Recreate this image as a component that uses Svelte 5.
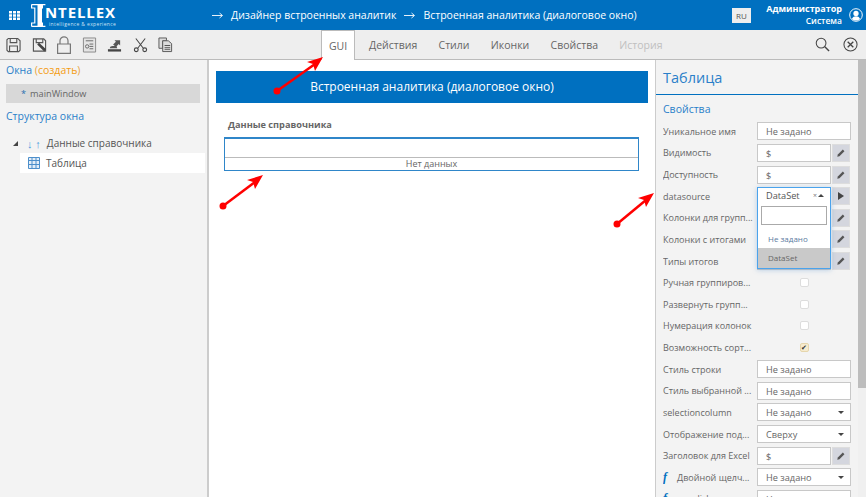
<script>
  const tabs = ['Действия', 'Стили', 'Иконки', 'Свойства'];

  const upperRows = [
    { label: 'Уникальное имя', kind: 'text', value: 'Не задано' },
    { label: 'Видимость', kind: 'edit', value: '$' },
    { label: 'Доступность', kind: 'edit', value: '$' }
  ];

  const lowerRows = [
    { label: 'Стиль строки', kind: 'text', value: 'Не задано' },
    { label: 'Стиль выбранной ...', kind: 'text', value: 'Не задано' },
    { label: 'selectioncolumn', kind: 'select', value: 'Не задано' },
    { label: 'Отображение под...', kind: 'select', value: 'Сверху' },
    { label: 'Заголовок для Excel', kind: 'edit', value: '$' },
    { label: 'Двойной щелч...', kind: 'select', value: 'Не задано', fn: true },
    { label: 'rowclick', kind: 'select', value: 'Не задано', fn: true }
  ];

  const arrows = [
    { x1: 277, y1: 91, x2: 323, y2: 57 },
    { x1: 223, y1: 206, x2: 263, y2: 175 },
    { x1: 617, y1: 224, x2: 654, y2: 193 }
  ];
</script>

{#snippet pencil()}
  <svg class="pencil" viewBox="0 0 12 12"><path d="M1.5 10.5l.7-2.6 6-6 1.9 1.9-6 6z" fill="#555" /></svg>
{/snippet}

{#snippet crumbArrow()}
  <svg class="crumb-arrow" viewBox="0 0 11 7"><path d="M0 3.5h10M7.500 1l3 2.500-3 2.500" fill="none" stroke="#fff" stroke-width="0.9" /></svg>
{/snippet}

{#snippet row(r)}
  <div class="row">
    <span class="label">
      {#if r.fn}<i class="fn">f</i>{/if}{r.label}
    </span>
    {#if r.kind === 'text'}
      <div class="field wide">{r.value}</div>
    {:else if r.kind === 'select'}
      <div class="field wide select">{r.value}<b class="caret"></b></div>
    {:else}
      <div class="field">{r.value}</div>
      <div class="side">{@render pencil()}</div>
    {/if}
  </div>
{/snippet}

<div class="app">
  <header class="top">
    <svg class="grid-icon" viewBox="0 0 11 9">
      <path d="M0 0h3v2.500H0zM4 0h3v2.500H4zM8 0h3v2.500H8zM0 3.300h3v2.500H0zM4 3.300h3v2.500H4zM8 3.300h3v2.500H8zM0 6.500h3V9H0zM4 6.500h3V9H4zM8 6.500h3V9H8z" fill="#fff" />
    </svg>
    <div class="logo">
      <svg class="logo-i" viewBox="0 0 15 23">
        <path d="M.6.6h13.800M.6 22.400h13.800M.6.6v3.400h3.200v15H.6v3.400" fill="none" stroke="#fff" stroke-width="1.200" />
        <path d="M6.500 1h5.500v3.500h-1v14h1V22H6.500z" fill="#fff" />
      </svg>
      <div class="logo-text">
        <span class="logo-name">NTELLEX</span>
        <span class="logo-sub">intelligence &amp; experience</span>
      </div>
    </div>
    <nav class="crumbs">
      {@render crumbArrow()}<span>Дизайнер встроенных аналитик</span>
      {@render crumbArrow()}<span>Встроенная аналитика (диалоговое окно)</span>
    </nav>
    <div class="lang">RU</div>
    <div class="user">
      <strong>Администратор</strong>
      <small>Система</small>
    </div>
    <svg class="avatar" viewBox="0 0 16 16">
      <circle cx="8" cy="8" r="7.200" fill="none" stroke="#fff" stroke-width="1.100" />
      <circle cx="8" cy="6.200" r="3" fill="#fff" />
      <path d="M3.400 12.600c.8-2.400 2.600-3.200 4.600-3.200s3.800.8 4.600 3.200A6.400 6.400 0 0 1 8 14.400a6.400 6.400 0 0 1-4.600-1.800z" fill="#fff" />
    </svg>
  </header>

  <div class="toolbar">
    <div class="tools">
      <svg viewBox="0 0 16 16"><path d="M2.500 1h10l2.500 2.500v10l-1.500 1.500h-11L1 13.500v-11zM4.500 1v4.500h7V1M3.800 15V9h8.400v6" fill="none" stroke="#555" stroke-width="1.200" /></svg>
      <svg viewBox="0 0 16 16"><path d="M1.500 1.500h11l2 2v11h-13zM4.500 1.500v4h7v-4" fill="none" stroke="#555" stroke-width="1.200" /><path d="M5.500 7.500l2-2 7.500 7-2 2.500z" fill="#444" /></svg>
      <svg class="lock" viewBox="0 0 14 18"><path d="M3 8V4.800a4 4 0 0 1 8 0V8M.6 8h12.800v9.400H.6z" fill="none" stroke="#777" stroke-width="1.200" /></svg>
      <svg viewBox="0 0 16 16"><path d="M1.500 .5h13v15h-13z" fill="#e4e4e4" stroke="#888" /><path d="M4 3.500h8M8 7h4M8 9.500h4M8 12h4" stroke="#666" /><circle cx="5.500" cy="9.500" r="1.800" fill="none" stroke="#666" /></svg>
      <svg viewBox="0 0 16 16"><path d="M1 12.500h14V15H1z" fill="#444" /><path d="M3 11.500c0-1.800 1.500-2.500 3-2.500h4l1 2.500z" fill="#555" /><path d="M6.500 7.500l3-3L8 3h6v5.500l-1.500-1.500-3 3z" fill="#555" /></svg>
      <svg viewBox="0 0 16 16"><path d="M3 1l8 10.500M13 1L5 11.500" stroke="#444" stroke-width="1.100" fill="none" /><circle cx="3.500" cy="13" r="2" fill="none" stroke="#444" stroke-width="1.200" /><circle cx="12.500" cy="13" r="2" fill="none" stroke="#444" stroke-width="1.200" /></svg>
      <svg viewBox="0 0 16 16"><path d="M1 .5h8v3H5v8H1z" fill="#ddd" stroke="#555" /><path d="M5 3.500h6l3.500 3v8.500H5z" fill="#ddd" stroke="#555" /><path d="M7 8h6v1H7zM7 10h6v1H7zM7 12h6v1H7z" fill="#555" /></svg>
    </div>
    <div class="tabs">
      <span class="tab active">GUI</span>
      {#each tabs as tab}
        <span class="tab">{tab}</span>
      {/each}
      <span class="tab muted">История</span>
    </div>
    <div class="tool-right">
      <svg viewBox="0 0 16 16"><circle cx="6.500" cy="6.500" r="5.200" fill="none" stroke="#444" stroke-width="1.100" /><path d="M10.500 10.500L15 15" stroke="#444" stroke-width="1.500" /></svg>
      <svg viewBox="0 0 16 16"><circle cx="8" cy="8" r="7" fill="none" stroke="#444" stroke-width="1.100" /><path d="M5 5l6 6M11 5l-6 6" stroke="#444" stroke-width="1.400" /></svg>
    </div>
  </div>

  <main class="body">
    <aside class="left">
      <h3>Окна <span class="paren">(<span class="create">создать</span>)</span></h3>
      <div class="window-item"><span class="star">*</span>mainWindow</div>
      <h3 class="structure">Структура окна</h3>
      <div class="tree-root">
        <b class="tree-toggle"></b>
        <span class="sort">↓ ↑</span>
        <span>Данные справочника</span>
      </div>
      <div class="tree-child">
        <svg viewBox="0 0 12 12"><path d="M.5.5h11v11H.5zM.5 3.500h11M.5 7.500h11M4 .5v11M8 .5v11" fill="#e4eef8" stroke="#4d8fcb" /></svg>
        <span>Таблица</span>
      </div>
    </aside>

    <section class="center">
      <div class="banner">Встроенная аналитика (диалоговое окно)</div>
      <div class="caption">Данные справочника</div>
      <div class="table">
        <div class="thead"></div>
        <div class="empty">Нет данных</div>
      </div>
    </section>

    <aside class="right">
      <h2>Таблица</h2>
      <h4>Свойства</h4>
      <div class="props">
        {#each upperRows as r}{@render row(r)}{/each}

        <div class="row open">
          <span class="label">datasource</span>
          <div class="dropdown">
            <div class="dd-value">DataSet<span class="dd-controls">×<b class="caret up"></b></span></div>
            <div class="dd-search"></div>
            <div class="dd-option">Не задано</div>
            <div class="dd-option selected">DataSet</div>
          </div>
          <div class="side"><b class="play"></b></div>
        </div>
        <div class="row">
          <span class="label">Колонки для групп...</span>
          <div class="field"></div>
          <div class="side">{@render pencil()}</div>
        </div>
        <div class="row">
          <span class="label">Колонки с итогами</span>
          <div class="field"></div>
          <div class="side">{@render pencil()}</div>
        </div>
        <div class="row">
          <span class="label">Типы итогов</span>
          <div class="field"></div>
          <div class="side">{@render pencil()}</div>
        </div>
        <div class="row"><span class="label">Ручная группиров...</span><span class="check"></span></div>
        <div class="row"><span class="label">Развернуть групп...</span><span class="check"></span></div>
        <div class="row"><span class="label">Нумерация колонок</span><span class="check"></span></div>
        <div class="row"><span class="label">Возможность сорт...</span><span class="check on">✔</span></div>

        {#each lowerRows as r}{@render row(r)}{/each}
      </div>
    </aside>
    <div class="scrollbar"><div class="thumb"></div></div>
  </main>

  <svg class="arrows" width="866" height="497">
    {#each arrows as a}
      <circle cx={a.x1} cy={a.y1} r="3.500" fill="#f00" />
      <line x1={a.x1} y1={a.y1} x2={a.x2 - 8} y2={a.y2 + 7} stroke="#f00" stroke-width="2.500" />
      <path d="M{a.x2} {a.y2}l-16 5 6 2 2 7z" fill="#f00" />
    {/each}
  </svg>
</div>

<style>
  :global(body) {
    margin: 0;
    overflow: hidden;
  }

  .app {
    position: relative;
    width: 866px;
    height: 497px;
    overflow: hidden;
    font-family: 'Open Sans', 'Noto Sans', sans-serif;
    font-size: 11px;
    color: #555;
    background: #fff;
  }

  .top {
    display: flex;
    align-items: center;
    height: 30px;
    background: #0070c0;
    color: #fff;
  }

  .grid-icon {
    width: 11px;
    height: 9px;
    margin-left: 9px;
  }

  .logo {
    display: flex;
    align-items: center;
    margin-left: 11px;
    width: 181px;
  }

  .logo-i {
    width: 15px;
    height: 23px;
  }

  .logo-text {
    display: flex;
    flex-direction: column;
    margin-left: -1px;
  }

  .logo-name {
    font-size: 15px;
    font-weight: 700;
    letter-spacing: 0.9px;
    line-height: 17px;
  }

  .logo-sub {
    font-size: 5px;
    line-height: 6px;
    letter-spacing: 0.35px;
    margin-left: 4px;
    color: #cfe4f5;
  }

  .crumbs {
    display: flex;
    align-items: center;
    gap: 8px;
    font-size: 10.500px;
    white-space: nowrap;
  }

  .crumb-arrow {
    width: 11px;
    height: 7px;
  }

  .lang {
    width: 19px;
    height: 15px;
    line-height: 15px;
    margin-left: auto;
    background: #eee;
    color: #555;
    font-size: 8px;
    text-align: center;
  }

  .user {
    display: flex;
    flex-direction: column;
    align-items: flex-end;
    width: 91px;
    line-height: 12px;
  }

  .user strong {
    font-size: 9px;
  }

  .user small {
    font-size: 8.500px;
    font-weight: 600;
  }

  .avatar {
    width: 14px;
    height: 14px;
    margin: 0 3px 0 7px;
  }

  .toolbar {
    display: flex;
    height: 29px;
    background: #eee;
    border-bottom: 1px solid #bbb;
    position: relative;
  }

  .tools {
    display: flex;
    align-items: center;
    gap: 10.500px;
    width: 321px;
    padding-left: 6px;
    box-sizing: border-box;
  }

  .tools svg {
    width: 15px;
    height: 16px;
  }

  .tools svg.lock {
    width: 14px;
    height: 18px;
  }

  .tabs {
    display: flex;
    height: 30px;
  }

  .tab {
    margin-right: 21.300px;
    line-height: 30px;
    font-size: 10.500px;
    color: #666;
  }

  .tab.active {
    width: 34px;
    margin-right: 14px;
    background: #fff;
    border: 1px solid #bbb;
    border-bottom: none;
    box-sizing: border-box;
    text-align: center;
  }

  .tab.muted {
    color: #c0c0c0;
  }

  .tool-right {
    display: flex;
    align-items: center;
    gap: 13px;
    margin-left: auto;
    padding-right: 8px;
  }

  .tool-right svg {
    width: 15px;
    height: 15px;
  }

  .body {
    display: flex;
    height: 437px;
  }

  .left {
    width: 209px;
    flex: none;
    box-sizing: border-box;
    padding: 2px 0 0 6px;
    background: #f3f3f3;
    border-right: 2px solid #ccc;
  }

  .left h3 {
    margin: 0;
    font-size: 10.500px;
    font-weight: 400;
    line-height: 16px;
    color: #2a7fc9;
  }

  .paren {
    color: #e8a33d;
  }

  .create {
    color: #f39c12;
  }

  .window-item {
    display: flex;
    align-items: center;
    width: 194px;
    height: 19px;
    margin-top: 6px;
    padding-left: 15px;
    box-sizing: border-box;
    background: #d8d8d8;
    color: #666;
    font-size: 9.200px;
  }

  .star {
    color: #2a6fb0;
    margin-right: 4px;
  }

  .left .structure {
    margin-top: 5px;
  }

  .tree-root {
    display: flex;
    align-items: center;
    height: 20px;
    margin: 9px 0 0 7px;
    font-size: 10px;
    color: #555;
  }

  .tree-toggle {
    width: 0;
    height: 0;
    margin-right: 9px;
    border-left: 5px solid transparent;
    border-bottom: 5px solid #444;
  }

  .sort {
    color: #4d9ade;
    font-size: 11px;
    margin-right: 6px;
  }

  .tree-child {
    display: flex;
    align-items: center;
    gap: 6px;
    width: 185px;
    height: 20px;
    margin-left: 14px;
    padding-left: 8px;
    box-sizing: border-box;
    background: #fff;
    font-size: 10px;
  }

  .tree-child svg {
    width: 12px;
    height: 12px;
  }

  .center {
    flex: 1;
    min-width: 0;
    padding: 11px 7px 0 7px;
  }

  .banner {
    height: 32px;
    line-height: 32px;
    background: #0070c0;
    color: #fff;
    font-size: 12px;
    text-align: center;
  }

  .caption {
    margin: 13px 0 0 12px;
    line-height: 18px;
    height: 18px;
    font-size: 9.200px;
    font-weight: 700;
    color: #666;
  }

  .table {
    margin: 3px 9px 0 8px;
    border: 1px solid #2f86c9;
    border-top-width: 2px;
  }

  .thead {
    height: 18px;
    border-bottom: 1px solid #bbb;
  }

  .empty {
    height: 12px;
    line-height: 12px;
    font-size: 9px;
    text-align: center;
    color: #666;
  }

  .right {
    width: 203px;
    flex: none;
    box-sizing: border-box;
    background: #f3f3f3;
    border-left: 1px solid #ccc;
    overflow: hidden;
  }

  .right h2 {
    margin: 0;
    height: 34px;
    padding-left: 7px;
    font-size: 14.500px;
    font-weight: 400;
    line-height: 36px;
    color: #2a7fc9;
    border-bottom: 1px solid #0070c0;
  }

  .right h4 {
    margin: 5px 0 0 7px;
    font-size: 10.500px;
    font-weight: 400;
    line-height: 18px;
    color: #2a7fc9;
  }

  .props {
    padding-left: 7px;
    padding-top: 2.500px;
  }

  .row {
    position: relative;
    display: flex;
    align-items: center;
    height: 21.630px;
  }

  .label {
    width: 94px;
    flex: none;
    font-size: 9px;
    white-space: nowrap;
    overflow: hidden;
    color: #666;
  }

  .fn {
    display: inline-block;
    width: 14px;
    font-family: 'Liberation Serif', serif;
    font-size: 12px;
    font-weight: 700;
    color: #0070c0;
  }

  .field {
    width: 74px;
    height: 18px;
    line-height: 17px;
    padding-left: 8px;
    box-sizing: border-box;
    background: #fff;
    border: 1px solid #c8c8c8;
    font-size: 9.200px;
    color: #666;
  }

  .field.wide {
    width: 94px;
  }

  .select {
    position: relative;
  }

  .caret {
    position: absolute;
    right: 6px;
    top: 7px;
    width: 0;
    height: 0;
    border-left: 3px solid transparent;
    border-right: 3px solid transparent;
    border-top: 3px solid #444;
  }

  .caret.up {
    position: static;
    display: inline-block;
    border-top: none;
    border-bottom: 3px solid #444;
    margin-left: 1px;
    vertical-align: 1px;
  }

  .side {
    display: flex;
    align-items: center;
    justify-content: center;
    width: 18px;
    height: 18px;
    margin-left: 1px;
    background: #d4d6de;
    border: 1px solid #ddd;
    box-sizing: border-box;
  }

  .pencil {
    width: 10px;
    height: 10px;
  }

  .play {
    width: 0;
    height: 0;
    border-top: 4px solid transparent;
    border-bottom: 4px solid transparent;
    border-left: 6px solid #444;
  }

  .dropdown {
    position: relative;
    z-index: 2;
    align-self: flex-start;
    width: 74px;
    height: 82px;
    margin-top: 2px;
    box-sizing: border-box;
    background: #fff;
    border: 1px solid #4ba3ec;
    box-shadow: 0 1px 5px rgba(60, 130, 200, 0.35);
    font-size: 9.200px;
  }

  .dd-value {
    display: flex;
    justify-content: space-between;
    height: 18px;
    line-height: 15px;
    padding: 0 6px 0 8px;
  }

  .dd-controls {
    font-size: 7px;
    color: #777;
  }

  .dd-search {
    height: 19px;
    margin: 0 3px;
    box-sizing: border-box;
    background: #fff;
    border: 1px solid #aaa;
  }

  .dd-option {
    height: 23px;
    line-height: 27px;
    padding-left: 10px;
    font-size: 8px;
    color: #5b7aa0;
  }

  .dd-option.selected {
    height: 20px;
    line-height: 20px;
    background: #c9c9c9;
    color: #666;
  }

  .check {
    display: flex;
    align-items: center;
    justify-content: center;
    width: 9px;
    height: 9px;
    box-sizing: border-box;
    margin-left: 42.500px;
    background: #fff;
    border: 1px solid #ddd;
    border-radius: 2px;
    font-size: 7px;
    line-height: 1;
  }

  .check.on {
    background: #f6ebcf;
    border-color: #e6d6ac;
    color: #333;
  }

  .scrollbar {
    width: 8px;
    flex: none;
    background: #f0f0f0;
  }

  .thumb {
    height: 328px;
    background: #bdbdbd;
  }

  .arrows {
    position: absolute;
    left: 0;
    top: 0;
    pointer-events: none;
    z-index: 5;
  }
</style>
